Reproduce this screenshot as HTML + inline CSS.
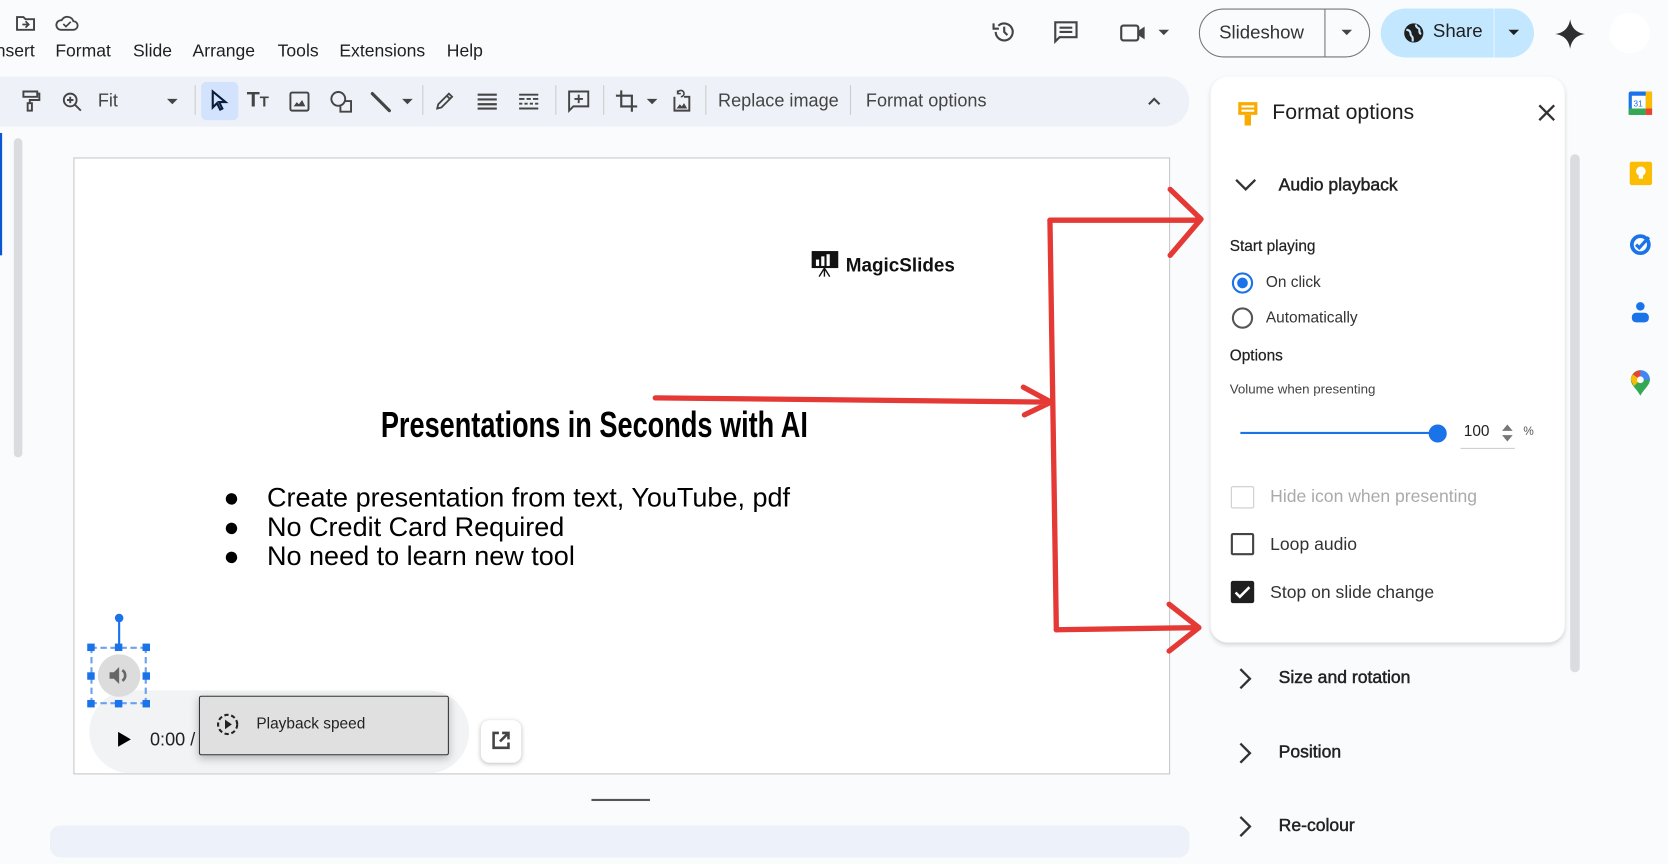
<!DOCTYPE html>
<html><head><meta charset="utf-8"><style>
*{box-sizing:border-box;margin:0;padding:0}
html,body{width:1668px;height:843px;overflow:hidden;background:#f9fbfd}
#w{position:absolute;left:0;top:0;width:1568px;height:793px;transform:scale(1.06378);transform-origin:0 0;font-family:"Liberation Sans",Arial,sans-serif;color:#1f1f1f}
.a{position:absolute}
.t{position:absolute;white-space:nowrap}
.m{-webkit-text-stroke:0.45px #222;font-weight:normal}
svg{position:absolute;overflow:visible}
</style></head><body><div id="w">
<svg style="left:14px;top:13px" width="20" height="18" viewBox="0 0 20 18"><path d="M2 3h6l2 2h8v10H2z" fill="none" stroke="#444" stroke-width="1.8"/><path d="M7 10h6M10 7l3 3-3 3" fill="none" stroke="#444" stroke-width="1.6"/></svg>
<svg style="left:52px;top:14px" width="22" height="16" viewBox="0 0 22 16"><path d="M5 14h12a4 4 0 0 0 0-8 6 6 0 0 0-11-1 4.5 4.5 0 0 0-1 9z" fill="none" stroke="#444" stroke-width="1.7"/><path d="M7.5 8.5l2.5 2.5 4.5-4.5" fill="none" stroke="#444" stroke-width="1.6"/></svg>
<div class="t" style="left:-4px;top:39px;font-size:16.5px">nsert</div>
<div class="t" style="left:52px;top:39px;font-size:16.5px">Format</div>
<div class="t" style="left:125px;top:39px;font-size:16.5px">Slide</div>
<div class="t" style="left:181px;top:39px;font-size:16.5px">Arrange</div>
<div class="t" style="left:261px;top:39px;font-size:16.5px">Tools</div>
<div class="t" style="left:319px;top:39px;font-size:16.5px">Extensions</div>
<div class="t" style="left:420px;top:39px;font-size:16.5px">Help</div>
<svg style="left:932px;top:18px" width="24" height="24" viewBox="0 0 24 24"><path d="M4 12a8 8 0 1 0 2.5-5.8" fill="none" stroke="#444" stroke-width="2"/><path d="M2 4v5h5" fill="none" stroke="#444" stroke-width="2"/><path d="M12 7v5l3 3" fill="none" stroke="#444" stroke-width="2"/></svg>
<svg style="left:990px;top:19px" width="24" height="22" viewBox="0 0 24 22"><path d="M2 2h20v14H6l-4 4z" fill="none" stroke="#444" stroke-width="2"/><path d="M6 7h12M6 11h12" stroke="#444" stroke-width="2"/></svg>
<svg style="left:1053px;top:21px" width="26" height="20" viewBox="0 0 26 20"><rect x="1" y="3" width="16" height="14" rx="2" fill="none" stroke="#444" stroke-width="2"/><path d="M17 8l6-4v12l-6-4z" fill="#444"/></svg>
<svg style="left:1089px;top:28px" width="10" height="6"><path d="M0 0h10L5 5z" fill="#444"/></svg>
<div class="a" style="left:1127px;top:8px;width:161px;height:46px;border:1px solid #747775;border-radius:23px"></div>
<div class="a" style="left:1245px;top:8px;width:1px;height:46px;background:#747775"></div>
<div class="t" style="left:1146px;top:20px;font-size:17.5px;color:#333">Slideshow</div>
<svg style="left:1261px;top:28px" width="10" height="6"><path d="M0 0h10L5 5z" fill="#444"/></svg>
<div class="a" style="left:1298px;top:8px;width:144px;height:46px;background:#c2e7ff;border-radius:23px"></div>
<div class="a" style="left:1404px;top:8px;width:1px;height:46px;background:#e8f4fc"></div>
<svg style="left:1319px;top:21px" width="20" height="20" viewBox="0 0 20 20"><circle cx="10" cy="10" r="9" fill="#1f1f1f"/><path d="M3 7c3 0 4 2 4 4s2 2 2 4v3M12 2c0 3 2 3 3 4s-1 4 2 5" fill="none" stroke="#c2e7ff" stroke-width="2"/></svg>
<div class="t" style="left:1347px;top:19px;font-size:17.5px">Share</div>
<svg style="left:1418px;top:28px" width="10" height="6"><path d="M0 0h10L5 5z" fill="#1f1f1f"/></svg>
<svg style="left:1462px;top:18px" width="28" height="28" viewBox="0 0 28 28"><path d="M14 0C15 8 20 13 28 14 20 15 15 20 14 28 13 20 8 15 0 14 8 13 13 8 14 0z" fill="#2d2f31"/></svg>
<div class="a" style="left:1513px;top:12px;width:38px;height:38px;border-radius:50%;background:#fff"></div>
<div class="a" style="left:-30px;top:72px;width:1148px;height:47px;background:#eef2f8;border-radius:24px"></div>
<svg style="left:20px;top:84px" width="18" height="22" viewBox="0 0 18 22"><path d="M2 2h13v5H2zM15 4h2v6H8v3" fill="none" stroke="#444" stroke-width="1.8"/><rect x="6" y="13" width="4" height="7" fill="none" stroke="#444" stroke-width="1.8"/></svg>
<svg style="left:58px;top:86px" width="20" height="20" viewBox="0 0 20 20"><circle cx="8" cy="8" r="6" fill="none" stroke="#444" stroke-width="1.8"/><path d="M12.5 12.5L18 18M5 8h6M8 5v6" stroke="#444" stroke-width="1.8"/></svg>
<div class="t" style="left:92px;top:85px;font-size:17px;color:#444">Fit</div>
<svg style="left:157px;top:93px" width="10" height="6"><path d="M0 0h10L5 5z" fill="#444"/></svg>
<div class="a" style="left:183px;top:80px;width:1px;height:28px;background:#ccc"></div>
<div class="a" style="left:189px;top:77px;width:35px;height:36px;background:#d3e3fd;border-radius:5px"></div>
<svg style="left:198px;top:85px" width="16" height="20" viewBox="0 0 16 20"><path d="M2 1v15l4-4 3 6 2-1-3-6h6z" fill="none" stroke="#0b1d3a" stroke-width="2"/></svg>
<div class="t" style="left:232px;top:83px;font-size:20px;font-weight:bold;color:#444">T<span style="font-size:14px">T</span></div>
<svg style="left:272px;top:86px" width="19" height="19" viewBox="0 0 19 19"><rect x="1" y="1" width="17" height="17" rx="1.5" fill="none" stroke="#444" stroke-width="1.8"/><path d="M4 14l3-4 2 2 3-4 3 6z" fill="#444"/></svg>
<svg style="left:310px;top:85px" width="22" height="22" viewBox="0 0 22 22"><circle cx="8" cy="8" r="6.5" fill="none" stroke="#444" stroke-width="1.8"/><path d="M14 10h6v10H10v-5" fill="none" stroke="#444" stroke-width="1.8"/></svg>
<svg style="left:347px;top:85px" width="22" height="22" viewBox="0 0 22 22"><path d="M3 3L19 19" stroke="#444" stroke-width="3" stroke-linecap="round"/></svg>
<svg style="left:378px;top:93px" width="10" height="6"><path d="M0 0h10L5 5z" fill="#444"/></svg>
<div class="a" style="left:397px;top:80px;width:1px;height:28px;background:#ccc"></div>
<svg style="left:409px;top:86px" width="18" height="18" viewBox="0 0 18 18"><path d="M2 16l1-4L13 2l3 3L6 15zM11 4l3 3" fill="none" stroke="#444" stroke-width="1.7"/></svg>
<svg style="left:449px;top:88px" width="18" height="15"><path d="M0 1h18M0 5.5h18M0 10h18M0 14h18" stroke="#444" stroke-width="2"/></svg>
<svg style="left:488px;top:88px" width="18" height="15"><path d="M0 1h18M0 5h5M7 5h4M13 5h5M0 9.5h3M5 9.5h3M10 9.5h3M15 9.5h3M0 14h18" stroke="#444" stroke-width="1.8"/></svg>
<div class="a" style="left:522px;top:80px;width:1px;height:28px;background:#ccc"></div>
<svg style="left:534px;top:85px" width="20" height="21" viewBox="0 0 20 21"><path d="M1 1h18v14H5l-4 4z" fill="none" stroke="#444" stroke-width="1.8"/><path d="M10 4v8M6 8h8" stroke="#444" stroke-width="1.8"/></svg>
<div class="a" style="left:567px;top:80px;width:1px;height:28px;background:#ccc"></div>
<svg style="left:578px;top:84px" width="22" height="22" viewBox="0 0 22 22"><path d="M6 1v15h15M1 6h15v15" fill="none" stroke="#444" stroke-width="2"/></svg>
<svg style="left:608px;top:93px" width="10" height="6"><path d="M0 0h10L5 5z" fill="#444"/></svg>
<svg style="left:631px;top:85px" width="19" height="21" viewBox="0 0 19 21"><path d="M3 6v13h14V6h-5" fill="none" stroke="#444" stroke-width="1.8"/><path d="M5 17l3-4 2 2 2-3 3 5z" fill="#444"/><path d="M9 6a3 3 0 1 0-3-3M6 0v3h3" fill="none" stroke="#444" stroke-width="1.5"/></svg>
<div class="a" style="left:663px;top:80px;width:1px;height:28px;background:#ccc"></div>
<div class="t" style="left:675px;top:85px;font-size:17px;color:#444">Replace image</div>
<div class="a" style="left:799px;top:80px;width:1px;height:28px;background:#ccc"></div>
<div class="t" style="left:814px;top:85px;font-size:17px;color:#444">Format options</div>
<svg style="left:1079px;top:91px" width="12" height="8"><path d="M1 7l5-5 5 5" fill="none" stroke="#444" stroke-width="2"/></svg>
<div class="a" style="left:0;top:125px;width:2px;height:115px;background:#0b57d0"></div>
<div class="a" style="left:13px;top:130px;width:8px;height:300px;background:#dadce0;border-radius:4px"></div>
<div class="a" style="left:69px;top:148px;width:1031px;height:580px;background:#fff;border:1px solid #c7c7c7"></div>
<svg style="left:763px;top:236px" width="26" height="24" viewBox="0 0 26 24"><rect x="0" y="0" width="25" height="16" fill="#111"/><rect x="4" y="8" width="3" height="6" fill="#fff"/><rect x="9" y="5" width="3" height="9" fill="#fff"/><rect x="14" y="3" width="3" height="11" fill="#fff"/><path d="M12 16v8M12 16l-5 8M12 16l5 8" stroke="#111" stroke-width="1.3"/></svg>
<div class="t" style="left:795px;top:238px;font-size:18.5px;font-weight:bold;color:#111;transform:scaleX(0.96);transform-origin:0 0">MagicSlides</div>
<div class="t" style="left:358px;top:381px;font-size:34px;font-weight:bold;transform:scaleX(0.75);transform-origin:0 0;color:#000">Presentations in Seconds with AI</div>
<div class="t" style="left:210px;top:455px;font-size:25px;line-height:27.7px;color:#000">●<br>●<br>●</div>
<div class="t" style="left:251px;top:455px;font-size:25.4px;line-height:27.7px;color:#000">Create presentation from text, YouTube, pdf<br>No Credit Card Required<br>No need to learn new tool</div>
<svg style="left:0;top:0" width="1568" height="793"><g fill="none" stroke="#e53935" stroke-width="5" stroke-linecap="round" stroke-linejoin="round">
<path d="M616 374L986 378M962 364L988 378 963 390"/>
<path d="M987 207L993 592"/>
<path d="M987 207L1128 207M1100 178L1129 206 1100 240"/>
<path d="M993 592L1126 590M1099 568L1127 590 1099 612"/></g></svg>
<div class="a" style="left:111px;top:584px;width:1.5px;height:24px;background:#1a73e8"></div>
<div class="a" style="left:108px;top:577px;width:8px;height:8px;border-radius:50%;background:#1a73e8"></div>
<div class="a" style="left:84px;top:649px;width:357px;height:78px;background:#f1f3f4;border-radius:39px"></div>
<div class="a" style="left:85px;top:608px;width:53px;height:54px;border:2px dashed #6ea0f0"></div>
<div class="a" style="left:92px;top:615px;width:40px;height:40px;border-radius:50%;background:#dcdcdc"></div>
<svg style="left:101px;top:624px" width="22" height="22" viewBox="0 0 22 22"><path d="M2 8h4l5-5v16l-5-5H2z" fill="#666"/><path d="M14 6a6 6 0 0 1 0 10" fill="none" stroke="#666" stroke-width="2.5"/></svg>
<div class="a" style="left:82px;top:605px;width:7px;height:7px;background:#1a73e8"></div>
<div class="a" style="left:108px;top:605px;width:7px;height:7px;background:#1a73e8"></div>
<div class="a" style="left:134px;top:605px;width:7px;height:7px;background:#1a73e8"></div>
<div class="a" style="left:82px;top:632px;width:7px;height:7px;background:#1a73e8"></div>
<div class="a" style="left:134px;top:632px;width:7px;height:7px;background:#1a73e8"></div>
<div class="a" style="left:82px;top:658px;width:7px;height:7px;background:#1a73e8"></div>
<div class="a" style="left:108px;top:658px;width:7px;height:7px;background:#1a73e8"></div>
<div class="a" style="left:134px;top:658px;width:7px;height:7px;background:#1a73e8"></div>
<svg style="left:111px;top:688px" width="12" height="14"><path d="M0 0l12 7-12 7z" fill="#000"/></svg>
<div class="t" style="left:141px;top:686px;font-size:17px;color:#222">0:00 /</div>
<div class="a" style="left:187px;top:654px;width:235px;height:56px;background:#e0e0e0;border:1.5px solid #333;border-radius:2px;box-shadow:0 3px 8px rgba(0,0,0,.25)"></div>
<svg style="left:203px;top:670px" width="22" height="22" viewBox="0 0 22 22"><circle cx="11" cy="11" r="9" fill="none" stroke="#222" stroke-width="2" stroke-dasharray="4 2.5"/><path d="M8.5 6.5v9l6.5-4.5z" fill="#222"/></svg>
<div class="t" style="left:241px;top:673px;font-size:14.5px;color:#222">Playback speed</div>
<div class="a" style="left:452px;top:677px;width:38px;height:40px;background:#fff;border-radius:8px;box-shadow:0 1px 4px rgba(0,0,0,.25)"></div>
<svg style="left:462px;top:687px" width="18" height="18" viewBox="0 0 18 18"><path d="M7 2H2v14h14v-5" fill="none" stroke="#444" stroke-width="2.4"/><path d="M10 2h6v6M16 2L8 10" fill="none" stroke="#444" stroke-width="2.4"/></svg>
<div class="a" style="left:556px;top:751px;width:55px;height:1.5px;background:#555"></div>
<div class="a" style="left:47px;top:776px;width:1071px;height:30px;background:#edf2fa;border-radius:10px"></div>
<div class="a" style="left:1138px;top:72px;width:352px;height:740px;background:#f9fbfd;border-radius:16px"></div>
<div class="a" style="left:1138px;top:72px;width:333px;height:532px;background:#fff;border-radius:16px;box-shadow:0 2px 4px rgba(0,0,0,.15)"></div>
<div class="a" style="left:1476px;top:145px;width:9px;height:487px;background:#dadce0;border-radius:5px"></div>
<svg style="left:1162px;top:94px" width="22" height="26" viewBox="0 0 22 26"><path d="M2 2h18v12H2z" fill="#f9ab00"/><path d="M8 14h6v10H8z" fill="#f9ab00"/><path d="M5 6h12M5 10h12" stroke="#fff" stroke-width="2"/></svg>
<div class="t" style="left:1196px;top:95px;font-size:20px">Format options</div>
<svg style="left:1446px;top:98px" width="16" height="16"><path d="M1 1l14 14M15 1L1 15" stroke="#333" stroke-width="2.2"/></svg>
<svg style="left:1161px;top:168px" width="20" height="12"><path d="M1 1l9 9 9-9" fill="none" stroke="#333" stroke-width="2.2"/></svg>
<div class="t m" style="left:1202px;top:165px;font-size:16.5px;color:#222">Audio playback</div>
<div class="t" style="left:1156px;top:224px;font-size:14.5px;color:#222;-webkit-text-stroke:0.2px #222">Start playing</div>
<div class="a" style="left:1158px;top:256px;width:20px;height:20px;border:2px solid #1a73e8;border-radius:50%"></div>
<div class="a" style="left:1163px;top:261px;width:10px;height:10px;background:#1a73e8;border-radius:50%"></div>
<div class="t" style="left:1190px;top:258px;font-size:14.5px;color:#333">On click</div>
<div class="a" style="left:1158px;top:289px;width:20px;height:20px;border:2px solid #555;border-radius:50%"></div>
<div class="t" style="left:1190px;top:291px;font-size:14.5px;color:#333">Automatically</div>
<div class="t" style="left:1156px;top:327px;font-size:14.5px;color:#222;-webkit-text-stroke:0.2px #222">Options</div>
<div class="t" style="left:1156px;top:359px;font-size:12.5px;color:#444">Volume when presenting</div>
<div class="a" style="left:1166px;top:406px;width:185px;height:2px;background:#1a73e8"></div>
<div class="a" style="left:1343px;top:399px;width:17px;height:17px;background:#1a73e8;border-radius:50%"></div>
<div class="t" style="left:1376px;top:398px;font-size:14.5px;color:#222">100</div>
<svg style="left:1412px;top:399px" width="10" height="16"><path d="M0 6l5-6 5 6zM0 10l5 6 5-6z" fill="#777"/></svg>
<div class="t" style="left:1432px;top:400px;font-size:11px;color:#555">%</div>
<div class="a" style="left:1373px;top:421px;width:51px;height:1px;background:#ccc"></div>
<div class="a" style="left:1157px;top:457px;width:22px;height:21px;border:1.5px solid #ccc;border-radius:2px"></div>
<div class="t" style="left:1194px;top:458px;font-size:16.5px;color:#aaa">Hide icon when presenting</div>
<div class="a" style="left:1157px;top:501px;width:22px;height:21px;border:2px solid #444;border-radius:2px"></div>
<div class="t" style="left:1194px;top:503px;font-size:16.5px;color:#333">Loop audio</div>
<div class="a" style="left:1157px;top:546px;width:22px;height:21px;background:#1f1f1f;border-radius:2px"></div>
<svg style="left:1160px;top:550px" width="16" height="13"><path d="M1.5 7l4 4 9-9" fill="none" stroke="#fff" stroke-width="2.4"/></svg>
<div class="t" style="left:1194px;top:548px;font-size:16.5px;color:#333">Stop on slide change</div>
<svg style="left:1165px;top:628px" width="12" height="20"><path d="M1 1l9 9-9 9" fill="none" stroke="#333" stroke-width="2.2"/></svg>
<div class="t m" style="left:1202px;top:628px;font-size:16.5px;color:#222">Size and rotation</div>
<svg style="left:1165px;top:698px" width="12" height="20"><path d="M1 1l9 9-9 9" fill="none" stroke="#333" stroke-width="2.2"/></svg>
<div class="t m" style="left:1202px;top:698px;font-size:16.5px;color:#222">Position</div>
<svg style="left:1165px;top:767px" width="12" height="20"><path d="M1 1l9 9-9 9" fill="none" stroke="#333" stroke-width="2.2"/></svg>
<div class="t m" style="left:1202px;top:767px;font-size:16.5px;color:#222">Re-colour</div>
<svg style="left:1531px;top:86px" width="22" height="22" viewBox="0 0 22 22"><rect x="0" y="0" width="22" height="22" rx="2" fill="#1a73e8"/><rect x="0" y="16" width="22" height="6" fill="#34a853"/><rect x="16" y="0" width="6" height="22" fill="#fbbc04"/><rect x="16" y="16" width="6" height="6" fill="#ea4335"/><rect x="3" y="4" width="13" height="12" fill="#fff"/><text x="4.5" y="14" font-size="8" fill="#1a73e8" font-family="Liberation Sans">31</text></svg>
<svg style="left:1532px;top:152px" width="21" height="22" viewBox="0 0 21 22"><rect width="21" height="22" rx="2" fill="#fbbc04"/><circle cx="10.5" cy="9" r="4.5" fill="#fff"/><rect x="8.5" y="13" width="4" height="3" fill="#fff"/></svg>
<svg style="left:1532px;top:219px" width="21" height="21" viewBox="0 0 21 21"><circle cx="10" cy="11" r="8" fill="none" stroke="#1a73e8" stroke-width="3.5"/><path d="M6 11l3 3 9-10" fill="none" stroke="#1a73e8" stroke-width="3"/></svg>
<svg style="left:1533px;top:283px" width="18" height="21" viewBox="0 0 18 21"><circle cx="9" cy="5" r="4" fill="#1a73e8"/><rect x="1" y="11" width="16" height="9" rx="4" fill="#1a73e8"/></svg>
<svg style="left:1533px;top:348px" width="18" height="24" viewBox="0 0 18 24"><path d="M9 24C6 18 0 14 0 9a9 9 0 0 1 18 0c0 5-6 9-9 15z" fill="#34a853"/><path d="M2 4a9 9 0 0 1 7-4v9z" fill="#ea4335"/><path d="M0 9a9 9 0 0 1 2-5l7 5-6 6z" fill="#fbbc04"/><path d="M9 0a9 9 0 0 1 9 9H9z" fill="#4285f4"/><circle cx="9" cy="9" r="3.2" fill="#fff"/></svg>
</div></body></html>
